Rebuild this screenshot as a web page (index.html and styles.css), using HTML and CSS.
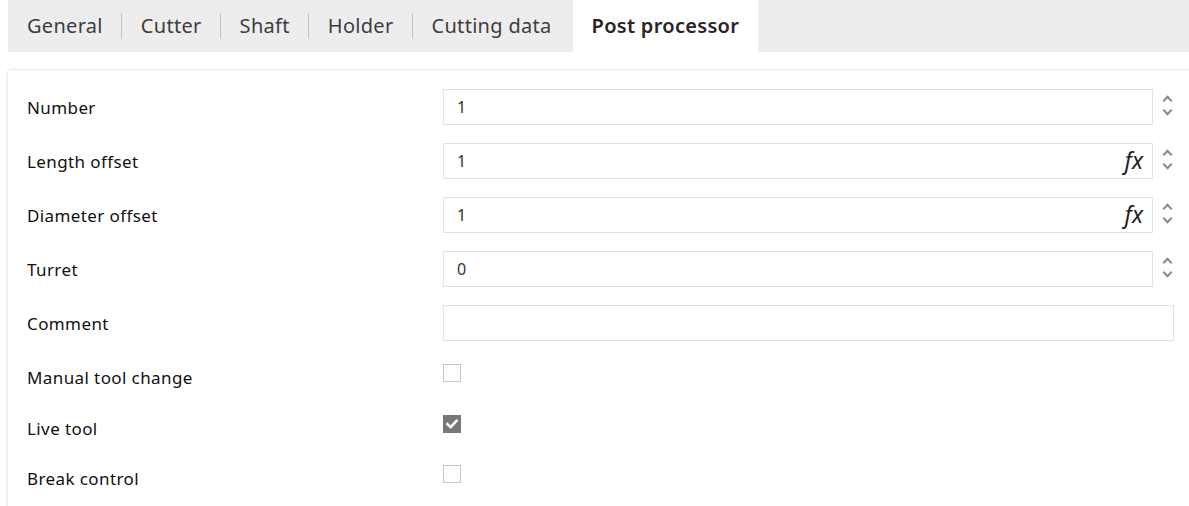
FILE: index.html
```html
<!DOCTYPE html>
<html>
<head>
<meta charset="utf-8">
<link rel="stylesheet" href="styles.css">
</head>
<body>
<div class="tabs">
  <div class="tab">General</div>
  <div class="tab sep">Cutter</div>
  <div class="tab sep">Shaft</div>
  <div class="tab sep">Holder</div>
  <div class="tab sep">Cutting data</div>
  <div class="tab active">Post processor</div>
</div>
<div class="panel">
  <div class="row">
    <div class="label">Number</div>
    <div class="field">
      <div class="input"><span class="val">1</span></div>
      <div class="spin"><span class="up"></span><span class="down"></span></div>
    </div>
  </div>
  <div class="row">
    <div class="label">Length offset</div>
    <div class="field">
      <div class="input"><span class="val">1</span><span class="fx">fx</span></div>
      <div class="spin"><span class="up"></span><span class="down"></span></div>
    </div>
  </div>
  <div class="row">
    <div class="label">Diameter offset</div>
    <div class="field">
      <div class="input"><span class="val">1</span><span class="fx">fx</span></div>
      <div class="spin"><span class="up"></span><span class="down"></span></div>
    </div>
  </div>
  <div class="row">
    <div class="label">Turret</div>
    <div class="field">
      <div class="input"><span class="val">0</span></div>
      <div class="spin"><span class="up"></span><span class="down"></span></div>
    </div>
  </div>
  <div class="row">
    <div class="label">Comment</div>
    <div class="field">
      <div class="input full"></div>
    </div>
  </div>
  <div class="row crow">
    <div class="label">Manual tool change</div>
    <div class="check"></div>
  </div>
  <div class="row crow">
    <div class="label">Live tool</div>
    <div class="check on">
      <svg width="18" height="18" viewBox="0 0 18 18"><path d="M4.5 9.2 L7.6 12.2 L13.5 5.8" fill="none" stroke="#fff" stroke-width="2.6" stroke-linecap="square"/></svg>
    </div>
  </div>
  <div class="row crow">
    <div class="label">Break control</div>
    <div class="check"></div>
  </div>
</div>
</body>
</html>
```
FILE: styles.css
```css
html, body {
  margin: 0;
  padding: 0;
  background: #fff;
  overflow: hidden;
}
body {
  padding-left: 8px;
  font-family: "Noto Sans", "Open Sans", sans-serif;
  width: 1189px;
  height: 506px;
  box-sizing: border-box;
}
.tabs {
  display: flex;
  align-items: center;
  height: 52px;
  background: #ededed;
}
.tab {
  position: relative;
  height: 52px;
  line-height: 52px;
  padding: 0 19px;
  font-size: 20px;
  color: #3d3d3d;
  letter-spacing: 0.3px;
}
.tab.sep::before {
  content: "";
  position: absolute;
  left: -1px;
  top: 13px;
  width: 1px;
  height: 26px;
  background: #c4c4c4;
}
.tab.active {
  background: #fff;
  color: #262626;
  font-weight: 600;
  letter-spacing: 0.3px;
  margin-left: 2px;
}
.panel {
  box-sizing: border-box;
  margin-top: 18px;
  margin-right: -20px;
  padding: 19px 0 0 19px;
  background: #fff;
  border-radius: 3px;
  box-shadow: 0 0 3px rgba(0, 0, 0, 0.22);
  height: 450px;
}
.row {
  display: flex;
  align-items: flex-start;
  height: 54px;
}
.crow {
  height: 50.5px;
}
.label {
  width: 416px;
  line-height: 37px;
  font-size: 17px;
  letter-spacing: 0.4px;
  color: #111;
}
.crow .label {
  line-height: 38px;
}
.field {
  display: flex;
  width: 731px;
}
.input {
  box-sizing: border-box;
  width: 710px;
  height: 36px;
  border: 1px solid #e2e2e2;
  display: flex;
  align-items: center;
  justify-content: space-between;
  padding: 0 9px 0 13px;
  font-size: 16px;
  color: #333;
}
.input.full {
  width: 731px;
}
.fx {
  font-style: italic;
  font-size: 23px;
  color: #1e1e1e;
  line-height: 1;
  margin-bottom: 2px;
}
.spin {
  width: 21px;
  position: relative;
}
.spin .up, .spin .down {
  position: absolute;
  left: 11px;
  width: 7px;
  height: 7px;
  border-left: 2px solid #8a8a8a;
  border-top: 2px solid #8a8a8a;
  box-sizing: border-box;
}
.spin .up {
  top: 8px;
  transform: rotate(45deg);
}
.spin .down {
  top: 18px;
  transform: rotate(225deg);
}
.check {
  box-sizing: border-box;
  width: 18px;
  height: 18px;
  margin-top: 5px;
  border: 1px solid #c6c6c6;
}
.check.on {
  background: #777;
  border-color: #777;
}
.check.on svg {
  display: block;
  margin: -1px;
}
```
